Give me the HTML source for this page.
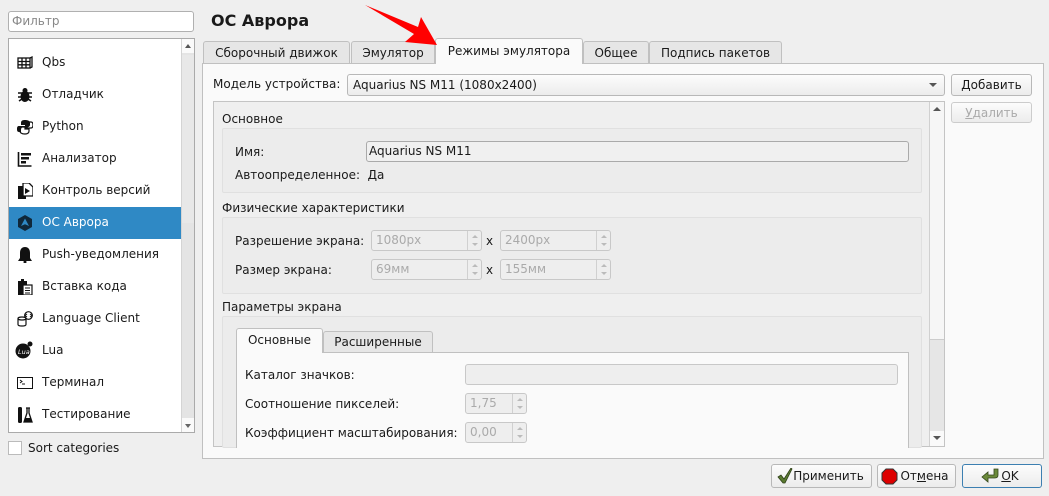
<!DOCTYPE html>
<html><head><meta charset="utf-8"><style>
*{box-sizing:border-box}
body{margin:0;width:1049px;height:496px;background:#efefef;font-family:"DejaVu Sans","Liberation Sans",sans-serif;font-size:12px;color:#1a1a1a;position:relative;overflow:hidden}
.a{position:absolute}
.t{position:absolute;white-space:nowrap;line-height:14px}
.inp{position:absolute;background:#fff;border:1px solid #b8b8b8;border-radius:3px}
.dis{position:absolute;background:#eee;border:1px solid #c8c8c8;border-radius:3px;color:#aaa;padding-left:4px;line-height:18px}
.spin{position:absolute;right:0;top:0;bottom:0;width:14px;border-left:1px solid #d0d0d0}
.spin:before{content:"";position:absolute;left:4px;top:4px;border:3px solid transparent;border-bottom:3px solid #bbb;border-top:0}
.spin:after{content:"";position:absolute;left:4px;bottom:4px;border:3px solid transparent;border-top:3px solid #bbb;border-bottom:0}
.tab{position:absolute;background:#e6e6e6;border:1px solid #c0c0c0;border-bottom:none;border-radius:3px 3px 0 0;text-align:center;line-height:22px}
.btn{position:absolute;background:linear-gradient(#fcfcfc,#ececec);border:1px solid #b8b8b8;border-radius:3px;text-align:center;line-height:20px}
.grp{position:absolute;border:1px solid #e0e0e0;border-radius:2px;background:#ececec}
.li{position:absolute;left:9px;width:172px;height:32px}
.li span{position:absolute;left:33px;top:8px;white-space:nowrap}
.li i{position:absolute;left:8px;top:8px;width:16px;height:16px}
</style></head><body>
<div class="inp" style="left:8px;top:11px;width:186px;height:21px;border-color:#b0b0b0"><span class="t" style="left:3px;top:2px;color:#888">Фильтр</span></div>
<div class="a" style="left:8px;top:38px;width:187px;height:395px;background:#fff;border:1px solid #aaa"></div>
<div class="a" style="left:181px;top:39px;width:13px;height:393px;background:#e4e4e4;border-left:1px solid #d4d4d4"></div>
<div class="a" style="left:182px;top:39px;width:12px;height:14px;background:#fafafa"></div>
<div class="a" style="left:185px;top:44px;border:3px solid transparent;border-bottom:4px solid #555;border-top:0"></div>
<div class="a" style="left:182px;top:418px;width:12px;height:14px;background:#fafafa"></div>
<div class="a" style="left:185px;top:424px;border:3px solid transparent;border-top:4px solid #666;border-bottom:0"></div>
<div class="a" style="left:182px;top:55px;width:12px;height:168px;background:#e8e8e8"></div>

<div class="li" style="top:47px"><i><svg width="16" height="16"><g fill="none" stroke="#111" stroke-width="1.3"><rect x="1" y="3" width="12" height="10"/><path d="M1 6.5h12M1 9.8h12M5 3v10M9 3v10M13 3l2-1v10l-2 1"/></g></svg></i><span>Qbs</span></div>
<div class="li" style="top:79px"><i><svg width="16" height="16"><ellipse cx="8" cy="9.5" rx="4.5" ry="5.5" fill="#111"/><circle cx="8" cy="3.5" r="2.5" fill="#111"/><path d="M1 6h14M1 10h14M2 14l3-2M14 14l-3-2" stroke="#111" stroke-width="1.5"/></svg></i><span>Отладчик</span></div>
<div class="li" style="top:111px"><i><svg width="16" height="16"><path d="M8 1c-3 0-4 1-4 3v2h4v1H2c-2 0-2 2-2 3s0 3 2 3h2v-2c0-2 1-3 3-3h4c1 0 2-1 2-2V4c0-2-2-3-5-3z" fill="#111"/><path d="M8 15c3 0 4-1 4-3v-2H8V9h6c2 0 2-2 2-3s0-3-2-3h-2v2c0 2-1 3-3 3H5c-1 0-2 1-2 2v2c0 2 2 3 5 3z" fill="none" stroke="#111" stroke-width="1.2"/></svg></i><span>Python</span></div>
<div class="li" style="top:143px"><i><svg width="16" height="16"><path d="M1.5 1v14h13" fill="none" stroke="#111" stroke-width="1.6"/><rect x="4" y="2" width="10" height="2.5" fill="#111"/><rect x="4" y="6" width="8" height="2.5" fill="#111"/><rect x="4" y="10" width="5" height="2.5" fill="#111"/></svg></i><span>Анализатор</span></div>
<div class="li" style="top:175px"><i><svg width="16" height="16"><path d="M1 3h8v13H1z" fill="#111"/><path d="M6 0h6l4 4v9H6z" fill="#fff" stroke="#111" stroke-width="1.3"/><path d="M8 5l5 3-5 3z" fill="#111"/></svg></i><span>Контроль версий</span></div>
<div class="li" style="top:207px;background:#2f89c5;color:#fff"><i><svg width="16" height="16"><path d="M8 0l7 4v8l-7 4-7-4V4z" fill="#10283a"/><path d="M8 3.5l4 7.5-4-1.8-4 1.8z" fill="#2f89c5"/></svg></i><span>ОС Аврора</span></div>
<div class="li" style="top:239px"><i><svg width="16" height="16"><path d="M8 0c-3 0-5 2-5 6v5l-2 3h14l-2-3V6c0-4-2-6-5-6z" fill="#111"/><circle cx="8" cy="15" r="1.5" fill="#111"/></svg></i><span>Push-уведомления</span></div>
<div class="li" style="top:271px"><i><svg width="16" height="16"><path d="M1 2h9v14H1z" fill="#111"/><rect x="4" y="0" width="3" height="3" fill="#111"/><rect x="6" y="6" width="9" height="10" fill="#fff" stroke="#111" stroke-width="1.2"/><path d="M8 9h5M8 11.5h5M8 14h5" stroke="#111"/></svg></i><span>Вставка кода</span></div>
<div class="li" style="top:303px"><i><svg width="16" height="16"><g fill="none" stroke="#111" stroke-width="1.2"><ellipse cx="5" cy="7.5" rx="4" ry="1.5"/><path d="M1 7.5v6c0 2 8 2 8 0v-6"/><circle cx="11.5" cy="4.5" r="3.8"/></g><path d="M10 3l-2 1.5 2 1.5M13 3l2 1.5-2 1.5" stroke="#111" fill="none"/></svg></i><span>Language Client</span></div>
<div class="li" style="top:335px"><i><svg width="18" height="18" style="margin:-2px"><circle cx="8" cy="10" r="7.5" fill="#111"/><circle cx="15" cy="3" r="2.5" fill="#111"/><text x="3" y="13" font-size="6.5" fill="#fff" font-family="DejaVu Sans">Lua</text></svg></i><span>Lua</span></div>
<div class="li" style="top:367px"><i><svg width="16" height="16"><rect x="0.5" y="2.5" width="15" height="11" fill="none" stroke="#111"/><path d="M3 5l2 1.5-2 1.5M5 9h3" stroke="#111" fill="none"/></svg></i><span>Терминал</span></div>
<div class="li" style="top:399px"><i><svg width="16" height="16"><rect x="1" y="0" width="4" height="16" rx="1.5" fill="#111"/><path d="M9 1h4M10 1v5l-3 9h8l-3-9V1" fill="none" stroke="#111" stroke-width="1.3"/><path d="M8.5 11h5l1.5 4h-8z" fill="#111"/></svg></i><span>Тестирование</span></div>

<div class="a" style="left:8px;top:441px;width:14px;height:14px;background:#fff;border:1px solid #bbb"></div>
<span class="t" style="left:28px;top:441px">Sort categories</span>

<span class="t" style="left:211px;top:12px;font-weight:bold;font-size:16px;line-height:18px">ОС Аврора</span>

<div class="tab" style="left:203px;top:41px;width:147px;height:23px">Сборочный движок</div>
<div class="tab" style="left:351px;top:41px;width:84px;height:23px">Эмулятор</div>
<div class="tab" style="left:583px;top:41px;width:66px;height:23px">Общее</div>
<div class="tab" style="left:649px;top:41px;width:133px;height:23px">Подпись пакетов</div>
<div class="a" style="left:202px;top:63px;width:842px;height:396px;background:#fafafa;border:1px solid #c0c0c0"></div>
<div class="tab" style="left:435px;top:38px;width:148px;height:26px;background:#fafafa;line-height:24px">Режимы эмулятора</div>

<span class="t" style="left:213px;top:77px">Модель устройства:</span>
<div class="btn" style="left:347px;top:74px;width:598px;height:22px;text-align:left;padding-left:5px">Aquarius NS M11 (1080x2400)</div>
<div class="a" style="left:929px;top:83px;border:4px solid transparent;border-top:4px solid #555;border-bottom:0"></div>
<div class="btn" style="left:951px;top:74px;width:81px;height:22px"><u>Д</u>обавить</div>
<div class="btn" style="left:951px;top:102px;width:81px;height:21px;color:#aaa;border-color:#ccc"><u>У</u>далить</div>

<div class="a" style="left:213px;top:101px;width:732px;height:346px;background:#efefef;border:1px solid #c4c4c4"></div>
<div class="a" style="left:929px;top:102px;width:15px;height:344px;background:#e6e6e6;border-left:1px solid #d0d0d0"></div>
<div class="a" style="left:930px;top:102px;width:14px;height:238px;background:#f6f6f6;border-bottom:1px solid #ccc"></div>
<div class="a" style="left:933px;top:107px;border:4px solid transparent;border-bottom:4px solid #555;border-top:0"></div>
<div class="a" style="left:930px;top:431px;width:14px;height:15px;background:#fafafa"></div>
<div class="a" style="left:933px;top:436px;border:4px solid transparent;border-top:4px solid #555;border-bottom:0"></div>

<span class="t" style="left:222px;top:112px">Основное</span>
<div class="grp" style="left:222px;top:128px;width:700px;height:65px"></div>
<span class="t" style="left:235px;top:145px">Имя:</span>
<div class="inp" style="left:366px;top:141px;width:543px;height:21px;background:#f0f0f0;border-color:#aaa"><span class="t" style="left:2px;top:2px">Aquarius NS M11</span></div>
<span class="t" style="left:235px;top:168px">Автоопределенное:&nbsp;&nbsp;Да</span>

<span class="t" style="left:222px;top:201px">Физические характеристики</span>
<div class="grp" style="left:222px;top:217px;width:700px;height:77px"></div>
<span class="t" style="left:235px;top:234px">Разрешение экрана:</span>
<div class="dis" style="left:371px;top:230px;width:111px;height:21px">1080px<div class="spin"></div></div>
<span class="t" style="left:486px;top:234px">x</span>
<div class="dis" style="left:500px;top:230px;width:111px;height:21px">2400px<div class="spin"></div></div>
<span class="t" style="left:235px;top:263px">Размер экрана:</span>
<div class="dis" style="left:371px;top:259px;width:111px;height:21px">69мм<div class="spin"></div></div>
<span class="t" style="left:486px;top:263px">x</span>
<div class="dis" style="left:500px;top:259px;width:111px;height:21px">155мм<div class="spin"></div></div>

<span class="t" style="left:222px;top:300px">Параметры экрана</span>
<div class="grp" style="left:222px;top:316px;width:700px;height:132px"></div>
<div class="tab" style="left:323px;top:331px;width:110px;height:22px;line-height:21px">Расширенные</div>
<div class="a" style="left:236px;top:352px;width:673px;height:96px;background:#fafafa;border:1px solid #c0c0c0;border-bottom:none"></div>
<div class="tab" style="left:236px;top:328px;width:87px;height:25px;background:#fafafa">Основные</div>
<span class="t" style="left:245px;top:368px">Каталог значков:</span>
<div class="dis" style="left:465px;top:364px;width:433px;height:21px"></div>
<span class="t" style="left:245px;top:397px">Соотношение пикселей:</span>
<div class="dis" style="left:465px;top:393px;width:62px;height:21px">1,75<div class="spin"></div></div>
<span class="t" style="left:245px;top:426px">Коэффициент масштабирования:</span>
<div class="dis" style="left:465px;top:422px;width:62px;height:21px">0,00<div class="spin"></div></div>

<div class="btn" style="left:771px;top:464px;width:101px;height:24px;line-height:22px;padding-left:14px"><svg class="a" style="left:5px;top:3px" width="16" height="16"><path d="M1 9l3-2 3 4 7-11 1 1-7 14h-2z" fill="#5a7a30" stroke="#2e3e18" stroke-width="0.8"/></svg>Применить</div>
<div class="btn" style="left:877px;top:464px;width:79px;height:24px;line-height:22px;padding-left:16px"><svg class="a" style="left:3px;top:3px" width="17" height="17"><path d="M5 1h7l4 4v7l-4 4H5l-4-4V5z" fill="#d00" stroke="#333"/></svg>От<u>м</u>ена</div>
<div class="btn" style="left:962px;top:464px;width:80px;height:24px;line-height:22px;border-color:#3c7fb1;padding-left:16px"><svg class="a" style="left:18px;top:3px" width="18" height="16"><path d="M17 1v6c0 2-1 3-3 3H7v4L1 9l6-5v3h6V1z" fill="#6b8a3a" stroke="#34461c" stroke-width="0.8"/></svg><u>O</u>K</div>

<svg class="a" style="left:0;top:0" width="1049" height="60"><path d="M365 5L418 27 421 17 437 45 405 42 414 34z" fill="#f00"/></svg>
</body></html>
